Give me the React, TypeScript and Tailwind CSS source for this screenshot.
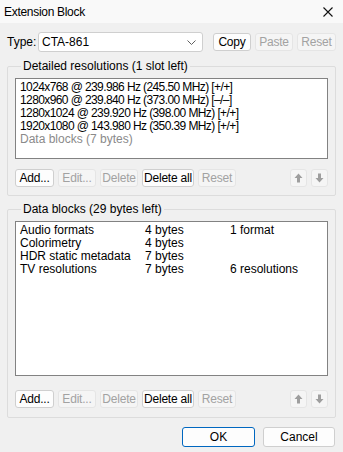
import React from 'react';

// ─── Extension Block dialog ─────────────────────────────────────────────────

const detailed = [
  '1024x768 @ 239.986 Hz (245.50 MHz) [+/+]',
  '1280x960 @ 239.840 Hz (373.00 MHz) [\u2013/\u2013]',
  '1280x1024 @ 239.920 Hz (398.00 MHz) [+/+]',
  '1920x1080 @ 143.980 Hz (350.39 MHz) [+/+]',
];

const blocks = [
  { name: 'Audio formats', size: '4 bytes', info: '1 format' },
  { name: 'Colorimetry', size: '4 bytes', info: '' },
  { name: 'HDR static metadata', size: '7 bytes', info: '' },
  { name: 'TV resolutions', size: '7 bytes', info: '6 resolutions' },
];

function Btn({ label, w, disabled }: { label: string; w: string; disabled?: boolean }) {
  return (
    <button
      className={
        'flex h-[18px] items-center justify-center whitespace-nowrap rounded-[3px] border text-[12px] leading-none tracking-[-0.2px] ' +
        w +
        (disabled
          ? ' border-[#e5e5e5] bg-[#f5f5f5] text-[#a2a2a2]'
          : ' border-[#cfcfcf] bg-[#fdfdfd] text-black')
      }
    >
      {label}
    </button>
  );
}

function Arrow({ down }: { down?: boolean }) {
  return (
    <button className="flex h-[18px] w-[17px] items-center justify-center rounded-[3px] border border-[#e5e5e5] bg-[#f5f5f5]">
      <svg width="9" height="10" viewBox="0 0 9 10" className={down ? 'rotate-180' : ''}>
        <path d="M4.5 0.5 L8.5 5 L6 5 L6 9.5 L3 9.5 L3 5 L0.5 5 Z" fill="#9e9e9e" />
      </svg>
    </button>
  );
}

function ButtonRow() {
  return (
    <div className="flex items-center">
      <div className="flex gap-[4px]">
        <Btn label="Add..." w="w-[39px]" />
        <Btn label="Edit..." w="w-[38px]" disabled />
        <Btn label="Delete" w="w-[38px]" disabled />
        <Btn label="Delete all" w="w-[52px]" />
        <Btn label="Reset" w="w-[38px]" disabled />
      </div>
      <div className="ml-auto flex gap-[4px]">
        <Arrow />
        <Arrow down />
      </div>
    </div>
  );
}

export default function App() {
  return (
    <div
      className="flex h-[452px] w-[343px] flex-col bg-[#f0f0f0] text-[12px] text-black"
      style={{ fontFamily: '"Segoe UI", "Liberation Sans", Arial, sans-serif' }}
    >
      {/* ── Title bar ── */}
      <div className="flex h-[23px] items-center bg-[#f9f9f9] pl-[4px] pr-[10px]">
        <span className="text-[12px] tracking-[-0.3px]">Extension Block</span>
        <svg width="10" height="10" viewBox="0 0 10 10" className="ml-auto">
          <path d="M0.5 0.5 L9.5 9.5 M9.5 0.5 L0.5 9.5" stroke="#111" strokeWidth="1.1" />
        </svg>
      </div>

      {/* ── Type row ── */}
      <div className="mt-[9px] flex h-[20px] items-center pl-[7px]">
        <span className="w-[31px]">Type:</span>
        <div className="flex h-[20px] w-[165px] items-center rounded-[3px] border border-[#cfcfcf] bg-white pl-[3px] pr-[6px]">
          <span>CTA-861</span>
          <svg width="9" height="5" viewBox="0 0 9 5" className="ml-auto">
            <path d="M0.5 0.5 L4.5 4.5 L8.5 0.5" stroke="#606060" fill="none" strokeWidth="1" />
          </svg>
        </div>
        <div className="ml-[10px] flex gap-[4px]">
          <Btn label="Copy" w="w-[38px]" />
          <Btn label="Paste" w="w-[38px]" disabled />
          <Btn label="Reset" w="w-[39px]" disabled />
        </div>
      </div>

      {/* ── Detailed resolutions ── */}
      <fieldset className="mx-[7px] mt-[7px] rounded-[2px] border border-[#dcdcdc] px-[7px] pb-[8px]">
        <legend className="ml-[6px] px-[2px] leading-[14px]">Detailed resolutions (1 slot left)</legend>
        <div className="mt-[5px] h-[81px] border border-[#828282] bg-white pl-[4px] pt-[2px] leading-[13px] tracking-[-0.6px]">
          {detailed.map((d) => (
            <div key={d}>{d}</div>
          ))}
          <div className="text-[#8a8a8a] tracking-normal">Data blocks (7 bytes)</div>
        </div>
        <div className="mt-[10px]">
          <ButtonRow />
        </div>
      </fieldset>

      {/* ── Data blocks ── */}
      <fieldset className="mx-[7px] mt-[6px] rounded-[2px] border border-[#dcdcdc] px-[7px] pb-[9px]">
        <legend className="ml-[6px] px-[2px] leading-[14px]">Data blocks (29 bytes left)</legend>
        <div className="mt-[5px] h-[155px] border border-[#828282] bg-white pl-[4px] pt-[2px] leading-[13px]">
          {blocks.map((b) => (
            <div key={b.name} className="flex">
              <span className="w-[125px]">{b.name}</span>
              <span className="w-[85px]">{b.size}</span>
              <span>{b.info}</span>
            </div>
          ))}
        </div>
        <div className="mt-[14px]">
          <ButtonRow />
        </div>
      </fieldset>

      {/* ── Footer ── */}
      <div className="mt-[9px] flex justify-end gap-[8px] pr-[8px]">
        <button className="flex h-[20px] w-[73px] items-center justify-center rounded-[3px] border border-[#0067c0] bg-[#fdfdfd] text-[12px]">
          OK
        </button>
        <button className="flex h-[20px] w-[72px] items-center justify-center rounded-[3px] border border-[#cfcfcf] bg-[#fdfdfd] text-[12px]">
          Cancel
        </button>
      </div>
    </div>
  );
}
